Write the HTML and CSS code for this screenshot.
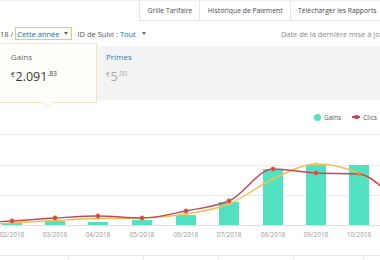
FILE: index.html
```html
<!DOCTYPE html>
<html lang="fr">
<head>
<meta charset="utf-8">
<title>Rapports</title>
<link rel="stylesheet" href="styles.css">
</head>
<body>
<div class="page">
  <div class="topbar">
    <nav class="tabs">
      <a class="tab">Grille Tarifaire</a>
      <a class="tab">Historique de Paiement</a>
      <a class="tab">Télécharger les Rapports</a>
    </nav>
  </div>
  <div class="filters">
    <div class="filter-left">
      <span class="range">18 /</span>
      <span class="select"><span class="link">Cette année</span><span class="caret"></span></span>
      <span class="tracking">ID de Suivi :&nbsp;<span class="link">Tout</span><span class="caret"></span></span>
    </div>
    <div class="updated">Date de la dernière mise à jour : 15/10/2018</div>
  </div>
  <div class="summary">
    <div class="card card-active">
      <div class="card-label">Gains</div>
      <div class="card-value"><span class="cur">€</span>2.091<span class="cents">.83</span></div>
    </div>
    <div class="card">
      <div class="card-label card-label-link">Primes</div>
      <div class="card-value card-value-muted"><span class="cur">€</span>5<span class="cents">.00</span></div>
    </div>
  </div>
  <div class="legend-row">
    <span class="legend-item"><span class="dot-teal"></span>Gains</span>
    <span class="legend-item"><span class="line-red"><span class="line-red-dot"></span></span>Clics</span>
  </div>
  <svg class="chart" width="380" height="120" viewBox="0 136 380 120">
    <g stroke-width="1">
      <line x1="0" y1="166.5" x2="380" y2="166.5" stroke="#ececec"/>
      <line x1="0" y1="196.5" x2="380" y2="196.5" stroke="#ececec"/>
      <line x1="0" y1="226.5" x2="380" y2="226.5" stroke="#e2e2e2"/>
    </g>
    <g fill="#52e2c1">
      <rect x="2" y="224" width="20" height="2"/>
      <rect x="45" y="222" width="20" height="4"/>
      <rect x="88" y="223" width="20" height="3"/>
      <rect x="132" y="221" width="20" height="5"/>
      <rect x="176" y="216" width="20" height="10"/>
      <rect x="219" y="203" width="20" height="23"/>
      <rect x="263" y="170" width="20" height="56"/>
      <rect x="306" y="166" width="20" height="60"/>
      <rect x="349" y="166" width="20" height="60"/>
    </g>
    <path fill="none" stroke="#f1c04f" stroke-width="1.4" d="M-31,226 C-23.8,225.7 -2.3,224.75 12,224 C26.3,223.25 40.7,222.25 55,221.5 C69.3,220.75 83.5,219.9 98,219.5 C112.5,219.1 127.3,219.5 142,219 C156.7,218.5 171.5,217.3 186,215 C200.5,212.7 214.5,210.8 229,205 C243.5,199.2 258.5,186.7 273,180 C287.5,173.3 301.7,165.2 316,165 C330.3,164.8 344.5,168.2 359,174 C373.5,179.8 395.7,195.7 403,200"/>
    <path fill="none" stroke="#c4485a" stroke-width="1.4" d="M-31,224 C-16.7,223.3 -2.3,222.8 12,222 C26.3,221.2 40.7,219.8 55,219 C69.3,218.2 83.7,217 98,217 C112.7,217 127.3,219 142,219 C156.7,219 171.3,214.9 186,212 C200.3,209.2 214.7,207.7 229,202 C243.7,196.1 258.3,170 273,170 C287.3,170 301.7,173.4 316,174 C330.3,174.6 344.7,174.3 359,175 C373.7,175.7 388.3,198.3 403,205"/>
    <g fill="#f1c04f">
      <circle cx="12" cy="224" r="1.6"/>
      <circle cx="55" cy="221.5" r="1.6"/>
      <circle cx="98" cy="219.5" r="1.6"/>
      <circle cx="142" cy="219" r="1.6"/>
      <circle cx="186" cy="215" r="1.6"/>
      <circle cx="229" cy="205" r="1.6"/>
      <circle cx="273" cy="180" r="1.6"/>
      <circle cx="316" cy="165" r="1.8"/>
    </g>
    <g fill="#c9454f" stroke="#ea8f52" stroke-width="0.6">
      <circle cx="12" cy="222" r="2.3"/>
      <circle cx="55" cy="219" r="2.3"/>
      <circle cx="98" cy="217" r="2.3"/>
      <circle cx="142" cy="219" r="2.3"/>
      <circle cx="186" cy="212" r="2.3"/>
      <circle cx="229" cy="202" r="2.3"/>
      <circle cx="273" cy="170" r="2.3"/>
      <circle cx="316" cy="174" r="2.3"/>
    </g>
    <circle cx="359" cy="175" r="2" fill="#e0874c"/>
    <g class="axis-labels" text-anchor="middle">
      <text x="12" y="238">02/2018</text>
      <text x="55" y="238">03/2018</text>
      <text x="98" y="238">04/2018</text>
      <text x="142" y="238">05/2018</text>
      <text x="186" y="238">06/2018</text>
      <text x="229" y="238">07/2018</text>
      <text x="273" y="238">08/2018</text>
      <text x="316" y="238">09/2018</text>
      <text x="359" y="238">10/2018</text>
    </g>
  </svg>
  <div class="table-head">
    <div class="th th-1"></div>
    <div class="th th-2"></div>
    <div class="th th-2"></div>
    <div class="th th-2"></div>
    <div class="th th-3"></div>
    <div class="th th-4"></div>
  </div>
</div>
</body>
</html>
```

FILE: styles.css
```css
* { box-sizing: border-box; }

html, body {
  margin: 0;
  padding: 0;
  background: #ffffff;
}

body {
  font-family: "Open Sans", "Liberation Sans", sans-serif;
  color: #555555;
  width: 380px;
  height: 260px;
  overflow: hidden;
}

.page {
  width: 380px;
  overflow: hidden;
}

.topbar {
  height: 21px;
  border-top: 1px solid #efefef;
  padding-left: 139px;
  white-space: nowrap;
}

.tabs {
  display: flex;
  height: 20px;
}

.tab {
  display: flex;
  align-items: center;
  flex: 0 0 auto;
  height: 20px;
  padding: 0 7px 0 7.5px;
  border-left: 1px solid #e4e4e4;
  border-bottom: 1px solid #e4e4e4;
  font-size: 6.8px;
  color: #4a4a4a;
}

.filters {
  display: grid;
  grid-template-columns: 281px 1fr;
  align-items: center;
  height: 25px;
  white-space: nowrap;
}

.filter-left {
  display: flex;
  align-items: center;
  font-size: 7.5px;
  color: #555555;
}

.range {
  margin-right: 1.5px;
}

.select {
  display: inline-flex;
  align-items: center;
  height: 13px;
  padding: 0 3px 0 1.5px;
  border: 1px solid #efc46c;
  background: #fffdf6;
}

.link {
  color: #1572b8;
}

.caret {
  display: inline-block;
  width: 0;
  height: 0;
  margin-left: 4px;
  border-top: 3px solid #666666;
  border-left: 2.5px solid transparent;
  border-right: 2.5px solid transparent;
}

.tracking {
  display: inline-flex;
  align-items: center;
  margin-left: 6px;
}

.tracking .caret {
  margin-left: 6px;
}

.updated {
  overflow: hidden;
  font-size: 7.4px;
  color: #8a8a8a;
}

.summary {
  display: flex;
  height: 54px;
  background: #f3f3f3;
}

.card {
  position: relative;
  padding: 7px 9px;
}

.card-active {
  width: 99px;
  margin: -3px 0 -3px -2px;
  padding: 7px 12px;
  background: #fffefb;
  border: 1px solid #f2e4c2;
}

.card-active::before,
.card-active::after {
  content: "";
  position: absolute;
  left: 50%;
  width: 0;
  height: 0;
  border-left: 6px solid transparent;
  border-right: 6px solid transparent;
}

.card-active::before {
  bottom: -6px;
  margin-left: -6px;
  border-top: 6px solid #f2e4c2;
}

.card-active::after {
  bottom: -4.6px;
  margin-left: -5px;
  border-left-width: 5px;
  border-right-width: 5px;
  border-top: 5px solid #fffefb;
}

.card-active + .card {
  padding-top: 5px;
}

.card-label {
  font-size: 8px;
  line-height: 11px;
  color: #666666;
}

.card-label-link {
  color: #1b7ec5;
}

.card-value {
  margin-top: 5px;
  font-size: 12.5px;
  line-height: 14px;
  color: #3a3a3a;
  white-space: nowrap;
}

.card-value-muted {
  color: #a8a8a8;
}

.cur {
  font-size: 7px;
  vertical-align: 4px;
  margin-right: 0.5px;
}

.cents {
  font-size: 6.8px;
  vertical-align: 4.5px;
}

.legend-row {
  display: flex;
  justify-content: flex-end;
  align-items: center;
  gap: 11px;
  height: 35px;
  padding-right: 3px;
  border-bottom: 1px solid #e8e8e8;
  font-size: 6.6px;
  color: #555555;
}

.legend-item {
  display: inline-flex;
  align-items: center;
  gap: 3px;
}

.dot-teal {
  display: inline-block;
  width: 7px;
  height: 7px;
  border-radius: 50%;
  background: #52e2c1;
}

.line-red {
  position: relative;
  display: inline-block;
  width: 8px;
  height: 1.4px;
  background: #c4485a;
}

.line-red-dot {
  position: absolute;
  left: 2px;
  top: -1.6px;
  width: 4.5px;
  height: 4.5px;
  border-radius: 50%;
  background: #c9454f;
}

.chart {
  display: block;
}

.axis-labels {
  font-family: "Open Sans", "Liberation Sans", sans-serif;
  font-size: 6.5px;
  fill: #9a9a9a;
}

.table-head {
  display: flex;
  height: 4px;
  border-top: 1px solid #e8e8e8;
}

.th {
  flex: 0 0 auto;
  border-right: 1px solid #e8e8e8;
}

.th-1 { width: 69px; }
.th-2 { width: 75px; }
.th-3 { width: 70px; }
.th-4 { width: 40px; }
```
